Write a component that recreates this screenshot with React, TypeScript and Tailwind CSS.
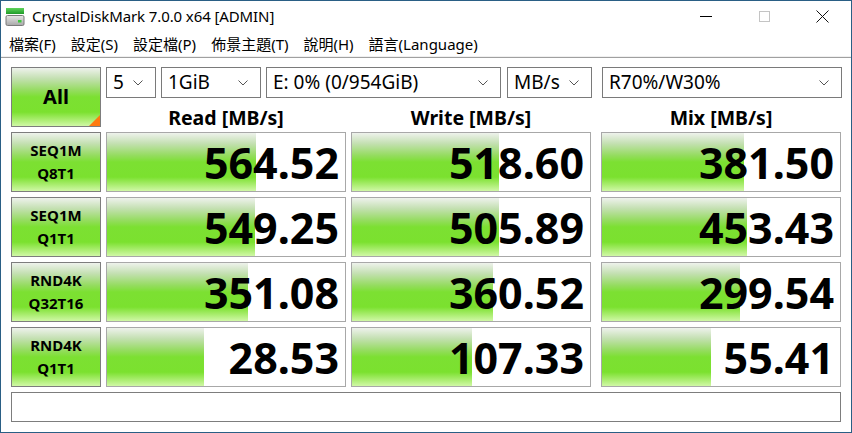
import React from "react";

const FONT = { fontFamily: '"Noto Sans", "Noto Sans CJK TC", sans-serif' };

const GRAD =
  "bg-[linear-gradient(to_bottom,#eef2ec_0%,#c4e0b2_18%,#96dc62_38%,#7ce032_50%,#7be12f_76%,#a6ec6a_88%,#d0f8a6_100%)]";

function Chevron() {
  return (
    <svg width="10" height="6" viewBox="0 0 10 6" className="shrink-0">
      <path d="M0.5 0.5 L5 5 L9.5 0.5" fill="none" stroke="#555" strokeWidth="1" />
    </svg>
  );
}

function Select({ w, text, pr = 12 }: { w: number; text: string; pr?: number }) {
  return (
    <div
      className="h-[31px] border border-[#7a7a7a] bg-white flex items-center justify-between pl-[6px] text-[19px] leading-none text-black"
      style={{ width: w, paddingRight: pr }}
    >
      <span>{text}</span>
      <Chevron />
    </div>
  );
}

function Label({ a, b }: { a: string; b: string }) {
  return (
    <div
      className={`w-[90px] h-[60px] border border-[#7d7d7d] ${GRAD} flex flex-col items-center justify-center text-[15px] font-bold leading-[23px] text-black`}
    >
      <span>{a}</span>
      <span>{b}</span>
    </div>
  );
}

function Cell({ v }: { v: number }) {
  const inner = 238;
  const w = Math.max(0, Math.min(inner, ((Math.log10(v) + 1) / 6) * inner));
  return (
    <div className="relative w-[240px] h-[60px] border border-[#a8a8a8] bg-white overflow-hidden">
      <div className={`absolute left-0 top-0 bottom-0 ${GRAD}`} style={{ width: w }} />
      <div className="relative h-full flex items-center justify-end pr-[6px] text-[43px] font-bold leading-none text-black">
        {v.toFixed(2)}
      </div>
    </div>
  );
}

function AppIcon() {
  return (
    <svg width="20" height="20" viewBox="0 0 20 20">
      <defs>
        <linearGradient id="g1" x1="0" y1="0" x2="0" y2="1">
          <stop offset="0" stopColor="#5fd35a" />
          <stop offset="1" stopColor="#1f9a2a" />
        </linearGradient>
        <linearGradient id="g2" x1="0" y1="0" x2="0" y2="1">
          <stop offset="0" stopColor="#e6e6e6" />
          <stop offset="1" stopColor="#a8a8a8" />
        </linearGradient>
      </defs>
      <rect x="1" y="1" width="18" height="6" fill="url(#g1)" />
      <rect x="1" y="8.5" width="18" height="10" rx="1.5" fill="url(#g2)" stroke="#7a7a7a" strokeWidth="1" />
      <rect x="13" y="13" width="3.5" height="2.5" fill="#3cc83c" />
    </svg>
  );
}

const rows: { a: string; b: string; r: number; w: number; m: number }[] = [
  { a: "SEQ1M", b: "Q8T1", r: 564.52, w: 518.6, m: 381.5 },
  { a: "SEQ1M", b: "Q1T1", r: 549.25, w: 505.89, m: 453.43 },
  { a: "RND4K", b: "Q32T16", r: 351.08, w: 360.52, m: 299.54 },
  { a: "RND4K", b: "Q1T1", r: 28.53, w: 107.33, m: 55.41 },
];

export default function App() {
  const menus = ["檔案(F)", "設定(S)", "設定檔(P)", "佈景主題(T)", "說明(H)", "語言(Language)"];
  return (
    <div
      className="w-[852px] h-[433px] bg-white border border-[#2a5f85] flex flex-col overflow-hidden text-black"
      style={FONT}
    >
      {/* Title bar */}
      <div className="h-[31px] flex items-center shrink-0">
        <div className="pl-[4px] pr-[7px] flex items-center">
          <AppIcon />
        </div>
        <div className="text-[15px] leading-none flex-1 tracking-[-0.1px]">CrystalDiskMark 7.0.0 x64 [ADMIN]</div>
        <div className="flex h-full">
          <div className="w-[58px] h-full flex items-center justify-center">
            <div className="w-[12px] h-px bg-black" />
          </div>
          <div className="w-[58px] h-full flex items-center justify-center">
            <div className="w-[11px] h-[11px] border border-[#c4c4c4]" />
          </div>
          <div className="w-[58px] h-full flex items-center justify-center">
            <svg width="13" height="13" viewBox="0 0 13 13">
              <path d="M0.5 0.5 L12.5 12.5 M12.5 0.5 L0.5 12.5" stroke="#111" strokeWidth="1" />
            </svg>
          </div>
        </div>
      </div>

      {/* Menu bar */}
      <div className="h-[24px] flex items-center shrink-0 text-[15px] leading-none pl-[0.5px]">
        {menus.map((m) => (
          <div key={m} className="px-[7.5px]">
            {m}
          </div>
        ))}
      </div>
      <div className="h-px bg-[#f0f0f0] shrink-0" />
      <div className="h-px bg-[#a0a0a0] shrink-0" />

      {/* Body */}
      <div className="flex flex-col pl-[10px] pt-[9px] gap-[5px]">
        {/* Top */}
        <div className="flex gap-[5px]">
          <div
            className={`relative w-[90px] h-[60px] border border-[#7d7d7d] ${GRAD} flex items-center justify-center text-[20px] font-bold leading-none`}
          >
            All
            <svg className="absolute right-0 bottom-0" width="11" height="11" viewBox="0 0 11 11">
              <path d="M11 0 L11 11 L0 11 Z" fill="#ff7a0f" />
            </svg>
          </div>
          <div className="flex flex-col">
            <div className="flex h-[31px]">
              <Select w={50} text="5" />
              <div className="w-[5px]" />
              <Select w={100} text="1GiB" />
              <div className="w-[5px]" />
              <Select w={235} text="E: 0% (0/954GiB)" />
              <div className="w-[6px]" />
              <Select w={85} text="MB/s" />
              <div className="w-[10px]" />
              <Select w={240} text="R70%/W30%" />
            </div>
            <div className="flex h-[29px] pt-[10px] text-[19.5px] font-bold leading-[19px]">
              <div className="w-[240px] text-center">Read [MB/s]</div>
              <div className="w-[5px]" />
              <div className="w-[240px] text-center">Write [MB/s]</div>
              <div className="w-[10px]" />
              <div className="w-[240px] text-center">Mix [MB/s]</div>
            </div>
          </div>
        </div>

        {rows.map((r, i) => (
          <div key={i} className="flex">
            <Label a={r.a} b={r.b} />
            <div className="w-[5px]" />
            <Cell v={r.r} />
            <div className="w-[5px]" />
            <Cell v={r.w} />
            <div className="w-[10px]" />
            <Cell v={r.m} />
          </div>
        ))}

        <div className="w-[830px] h-[30px] border border-[#7d7d7d] bg-white" />
      </div>
    </div>
  );
}
